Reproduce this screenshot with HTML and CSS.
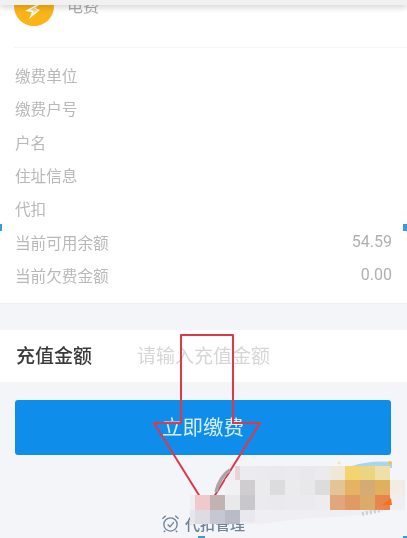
FILE: index.html
```html
<!DOCTYPE html>
<html lang="zh">
<head>
<meta charset="utf-8">
<title>电费</title>
<link rel="stylesheet" href="styles.css">
</head>
<body>
<div class="page">
  <div class="topbar"></div>
  <section class="card">
    <header class="head">
      <svg class="logo" viewBox="0 0 40 40" width="40" height="40">
        <circle cx="20" cy="20" r="20" fill="#fbb416"/>
        <path d="M31 14 L11 25 L18 26 L15 33 L26 24 L21 22 Z" fill="#fff"/>
        <path d="M24 19 L16 24 L20 25 L19 28 L23 24 L20 22 Z" fill="#fcd26e"/>
      </svg>
      <span class="head-title">电费</span>
    </header>
    <ul class="rows">
      <li class="row"><span>缴费单位</span></li>
      <li class="row"><span>缴费户号</span></li>
      <li class="row"><span>户名</span></li>
      <li class="row"><span>住址信息</span></li>
      <li class="row"><span>代扣</span></li>
      <li class="row"><span>当前可用余额</span><span class="num">54.59</span></li>
      <li class="row"><span>当前欠费金额</span><span class="num">0.00</span></li>
    </ul>
  </section>
  <section class="amount">
    <span class="amount-label">充值金额</span>
    <span class="amount-hint">请输入充值金额</span>
  </section>
  <div class="action"><button class="pay" type="button">立即缴费</button></div>
  <footer class="foot">
    <svg class="clock" viewBox="0 0 20 20" width="19" height="19" fill="none" stroke="#6f8296" stroke-width="1.4">
      <circle cx="10" cy="11" r="7"/>
      <path d="M7 11 L9.5 13.5 L13.5 8.5"/>
      <path d="M1.5 5 L5 1.8 M18.5 5 L15 1.8 M4.5 17.5 L3 19 M15.5 17.5 L17 19"/>
    </svg>
    <span class="foot-text">代扣管理</span>
  </footer>
  <svg class="overlay" viewBox="0 0 407 538" width="407" height="538">
    <path class="mark" d="M181 423 V335 H233 V423 H260 L207 508 L154 423 Z"/>
    <path class="smear" d="M230 470 Q220 476 216 492"/>
    <path d="M352 466 Q370 460 392 462 L392 468 H352 Z" fill="#a9d5ee"/>
    <circle cx="390" cy="463" r="2" fill="#f5c542"/>
    <circle cx="339" cy="463" r="1.5" fill="#f5e3a8"/>
    <g class="mosaic">
      <path d="M240 466 H390 V480 H405 V510 H388 L350 516 L300 519 L260 524 L190 524 V495 H225 V480 Q232 470 240 466 Z" fill="#efeff3"/>
      <rect x="235" y="466" width="5" height="14" fill="#e8d3d5"/>
      <rect x="240" y="466" width="15" height="14" fill="#ecebef"/>
      <rect x="255" y="466" width="15" height="14" fill="#ebebee"/>
      <rect x="270" y="466" width="15" height="14" fill="#eaeaed"/>
      <rect x="285" y="466" width="15" height="14" fill="#ebebee"/>
      <rect x="300" y="466" width="15" height="14" fill="#e9e9ec"/>
      <rect x="315" y="466" width="15" height="14" fill="#ebebee"/>
      <rect x="330" y="466" width="15" height="14" fill="#efe8d9"/>
      <rect x="345" y="466" width="15" height="14" fill="#f3d46e"/>
      <rect x="360" y="466" width="15" height="14" fill="#ecd57f"/>
      <rect x="375" y="466" width="15" height="14" fill="#efdfa9"/>

      <rect x="225" y="480" width="15" height="15" fill="#f1f0f3"/>
      <rect x="240" y="480" width="15" height="15" fill="#cfcdd0"/>
      <rect x="255" y="480" width="15" height="15" fill="#ebeaed"/>
      <rect x="270" y="480" width="15" height="15" fill="#dcdcde"/>
      <rect x="285" y="480" width="15" height="15" fill="#ebebee"/>
      <rect x="300" y="480" width="15" height="15" fill="#e8e8ea"/>
      <rect x="315" y="480" width="15" height="15" fill="#dcdcdd"/>
      <rect x="330" y="480" width="15" height="15" fill="#e3c595"/>
      <rect x="345" y="480" width="15" height="15" fill="#e6b263"/>
      <rect x="360" y="480" width="15" height="15" fill="#d4ab75"/>
      <rect x="375" y="480" width="15" height="15" fill="#e1b05f"/>
      <rect x="390" y="480" width="15" height="15" fill="#f3ece5"/>

      <rect x="195" y="495" width="15" height="15" fill="#efc9cb"/>
      <rect x="210" y="495" width="15" height="15" fill="#c2b3b3"/>
      <rect x="225" y="495" width="15" height="15" fill="#e9e8eb"/>
      <rect x="240" y="495" width="15" height="15" fill="#c8c7ca"/>
      <rect x="255" y="495" width="15" height="15" fill="#ebebee"/>
      <rect x="270" y="495" width="15" height="15" fill="#eaeaed"/>
      <rect x="285" y="495" width="15" height="15" fill="#ebebee"/>
      <rect x="300" y="495" width="15" height="15" fill="#ebebee"/>
      <rect x="315" y="495" width="15" height="15" fill="#ededf0"/>
      <rect x="330" y="495" width="15" height="15" fill="#e3a67c"/>
      <rect x="345" y="495" width="15" height="15" fill="#e09b65"/>
      <rect x="360" y="495" width="15" height="15" fill="#dcab6c"/>
      <rect x="375" y="495" width="15" height="15" fill="#e6854d"/>
      <path d="M382 505 L391 498 L392 505 Z" fill="#f97316"/>

      <rect x="190" y="510" width="5" height="13" fill="#e6e6eb"/>
      <rect x="195" y="510" width="15" height="14" fill="#dedbe2"/>
      <rect x="210" y="510" width="15" height="14" fill="#c5c8d2"/>
      <rect x="225" y="510" width="15" height="14" fill="#b9bcc6"/>
      <rect x="240" y="510" width="15" height="12" fill="#e8e8ee"/>
    </g>
    <path class="smear-light" d="M362 514 L382 510"/>
    <rect x="0" y="224" width="2" height="7" fill="#3a9ad9"/>
    <rect x="403" y="224" width="4" height="7" fill="#3a9ad9"/>
    <rect x="198" y="536" width="7" height="2" fill="#3a9ad9"/>
    <rect x="403" y="536" width="4" height="2" fill="#3a9ad9"/>
  </svg>
</div>
</body>
</html>
```
FILE: styles.css
```css
* { box-sizing: border-box; margin: 0; padding: 0; }
html, body { height: 100%; overflow: hidden; }
body {
  background: #f4f5f9;
  font-family: "Roboto", "Noto Sans CJK SC", sans-serif;
}
.page {
  position: relative;
  width: 407px;
  height: 538px;
  overflow: hidden;
}
.topbar {
  position: relative;
  z-index: 2;
  height: 5px;
  background: #f1f1f1;
  box-shadow: 0 2px 6px rgba(0, 0, 0, .22);
}
.card {
  height: 299px;
  background: #fff;
  border-bottom: 1px solid #eeeff2;
}
.head {
  display: flex;
  gap: 13px;
  height: 43px;
  margin-left: 14px;
  overflow: hidden;
  border-bottom: 1px solid #f5f5f5;
}
.logo {
  flex: none;
  margin-top: -19px;
  filter: blur(.4px);
}
.head-title {
  margin-top: -10px;
  font-size: 16px;
  line-height: 24px;
  color: #aaa;
  filter: blur(.5px);
}
.rows {
  list-style: none;
  padding: 10.5px 15px 0;
}
.row {
  display: flex;
  justify-content: space-between;
  align-items: center;
  height: 33.3px;
  font-size: 15.6px;
  color: #b8b8b8;
  filter: blur(.45px);
}
.num {
  font-size: 16px;
  color: #b0b0b0;
}
.amount {
  display: flex;
  align-items: center;
  height: 52px;
  margin-top: 26px;
  padding: 0 15px 3px 16px;
  background: #fff;
}
.amount-label {
  width: 121px;
  font-size: 19px;
  font-weight: 500;
  color: #3a3a3a;
  filter: blur(.4px);
}
.amount-hint {
  font-size: 19px;
  color: #d6d6d6;
  filter: blur(.5px);
}
.action {
  padding: 18px 16px 0 15px;
}
.pay {
  display: block;
  width: 100%;
  height: 55px;
  border: 0;
  border-radius: 3px;
  background: #0e8eea;
  color: #d8edfb;
  font-family: inherit;
  font-size: 20.5px;
  padding-bottom: 4px;
  filter: blur(.35px);
}
.foot {
  display: flex;
  align-items: center;
  gap: 5px;
  margin-top: 58px;
  padding-left: 161px;
  height: 20px;
}
.clock { flex: none; filter: blur(.4px); }
.foot-text {
  font-size: 15px;
  font-weight: 500;
  color: #6f8296;
  filter: blur(.7px);
}
.overlay {
  position: absolute;
  inset: 0;
  display: block;
}
.mosaic { filter: blur(.4px); }
.mark {
  fill: none;
  stroke: #e0374a;
  stroke-width: 2;
  stroke-linejoin: round;
}
.smear {
  fill: none;
  stroke: #a9a5a5;
  stroke-width: 3.5;
}
.smear-light {
  fill: none;
  stroke: #b5b5b8;
  stroke-width: 4;
  stroke-dasharray: 2 2;
  opacity: .6;
}
```
